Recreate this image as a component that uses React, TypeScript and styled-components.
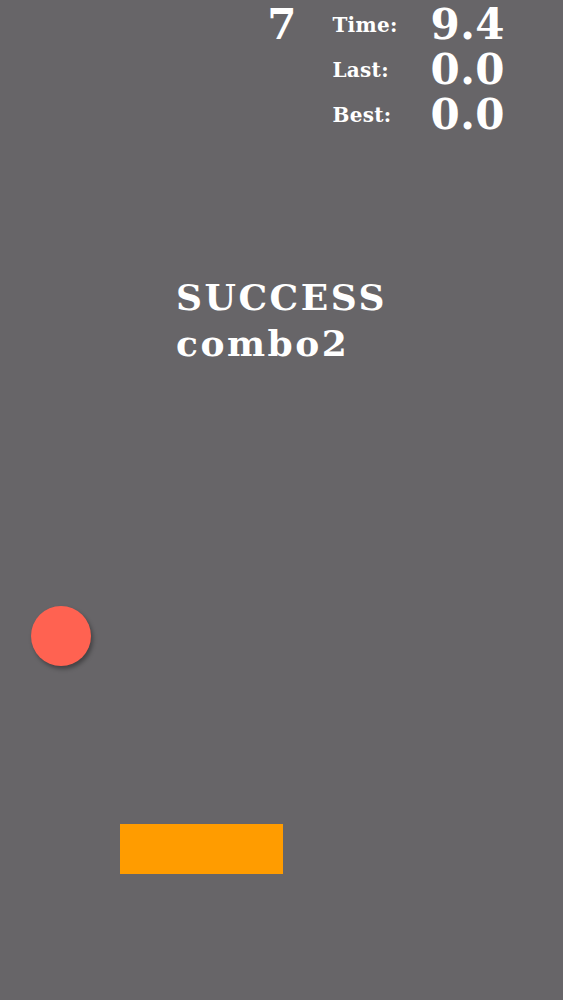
import styled, { createGlobalStyle } from "styled-components";

const bg = "#676568";
const white = "#ffffff";
const ballRed = "#ff6251";
const paddleOrange = "#ff9c00";
const font = `"DejaVu Serif", "Liberation Serif", serif`;

const GlobalStyle = createGlobalStyle`
  html, body {
    margin: 0;
    padding: 0;
    background: ${bg};
  }
`;

type Stat = { label: string; value: string };

const stats: Stat[] = [
  { label: "Time:", value: "9.4" },
  { label: "Last:", value: "0.0" },
  { label: "Best:", value: "0.0" },
];

const App = () => {
  return (
    <>
      <GlobalStyle />
      <Stage>
        <Hud>
          <Score>7</Score>
          <StatGrid>
            {stats.map((s) => (
              <Row key={s.label}>
                <Label>{s.label}</Label>
                <Value>{s.value}</Value>
              </Row>
            ))}
          </StatGrid>
        </Hud>
        <MessageWrap>
          <Message>
            <div>SUCCESS</div>
            <div>combo2</div>
          </Message>
        </MessageWrap>
        <Ball $x={31} $y={606} />
        <Paddle $x={120} $y={824} />
      </Stage>
    </>
  );
};

export default App;

const Stage = styled.div`
  position: relative;
  width: 100%;
  height: 1000px;
  overflow: hidden;
  background: ${bg};
  color: ${white};
  font-family: ${font};
  font-weight: 700;
`;

const Hud = styled.div`
  display: flex;
  justify-content: flex-end;
  align-items: flex-start;
  padding: 2px 58px 0 0;
`;

const Score = styled.div`
  font-size: 42px;
  line-height: normal;
  margin: -2px 36px 0 0;
`;

const StatGrid = styled.div`
  display: flex;
  flex-direction: column;
`;

const Row = styled.div`
  display: flex;
  align-items: center;
  height: 45px;
`;

const Label = styled.div`
  width: 98px;
  font-size: 20px;
  letter-spacing: 0.3px;
`;

const Value = styled.div`
  font-size: 42px;
  line-height: 42px;
  letter-spacing: 0.5px;
`;

const MessageWrap = styled.div`
  display: flex;
  justify-content: center;
  margin-top: 137px;
`;

const Message = styled.div`
  font-size: 36px;
  line-height: 46px;
  letter-spacing: 2.5px;
  text-align: left;
`;

const Ball = styled.div<{ $x: number; $y: number }>`
  position: absolute;
  left: ${(p) => p.$x}px;
  top: ${(p) => p.$y}px;
  width: 60px;
  height: 60px;
  border-radius: 50%;
  background: ${ballRed};
  box-shadow: 2px 3px 4px rgba(0, 0, 0, 0.35);
`;

const Paddle = styled.div<{ $x: number; $y: number }>`
  position: absolute;
  left: ${(p) => p.$x}px;
  top: ${(p) => p.$y}px;
  width: 163px;
  height: 50px;
  background: ${paddleOrange};
`;
